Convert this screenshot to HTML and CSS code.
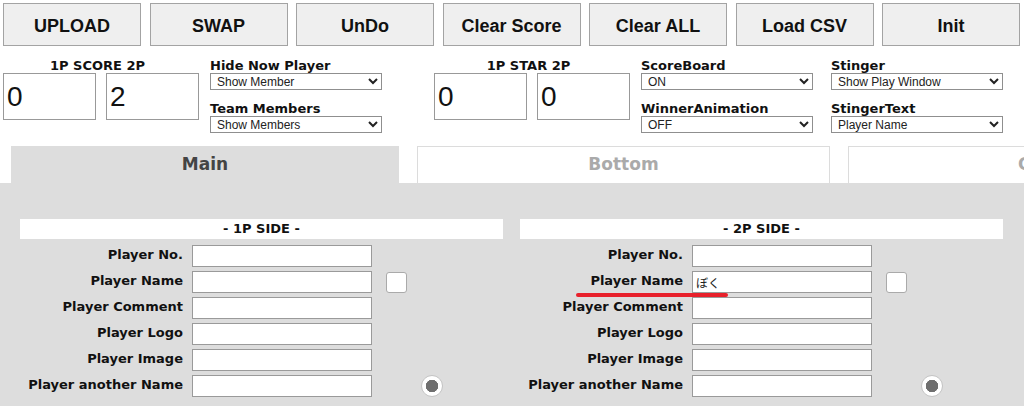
FILE: index.html
```html
<!DOCTYPE html>
<html lang="ja">
<head>
  <meta charset="UTF-8" />
  <meta name="viewport" content="width=device-width, initial-scale=1" />
  <title>Score Controller</title>
  <link rel="stylesheet" href="styles.css">
</head>
<body>

  <div class="toolbar">
    <button class="tool-btn">UPLOAD</button>
    <button class="tool-btn">SWAP</button>
    <button class="tool-btn">UnDo</button>
    <button class="tool-btn">Clear Score</button>
    <button class="tool-btn">Clear ALL</button>
    <button class="tool-btn">Load CSV</button>
    <button class="tool-btn">Init</button>
  </div>

  <div class="controls">
    <div class="pair">
      <div class="pair-title">1P SCORE 2P</div>
      <div class="pair-inputs">
        <input type="text" class="big-input" value="0" />
        <input type="text" class="big-input" value="2" />
      </div>
    </div>

    <div class="select-group first">
      <label class="ctrl-label">Hide Now Player</label>
      <select class="ctrl-select"><option>Show Member</option></select>
      <label class="ctrl-label second">Team Members</label>
      <select class="ctrl-select"><option>Show Members</option></select>
    </div>

    <div class="pair star">
      <div class="pair-title">1P STAR 2P</div>
      <div class="pair-inputs">
        <input type="text" class="big-input" value="0" />
        <input type="text" class="big-input" value="0" />
      </div>
    </div>

    <div class="select-group">
      <label class="ctrl-label">ScoreBoard</label>
      <select class="ctrl-select"><option>ON</option></select>
      <label class="ctrl-label second">WinnerAnimation</label>
      <select class="ctrl-select"><option>OFF</option></select>
    </div>

    <div class="select-group">
      <label class="ctrl-label">Stinger</label>
      <select class="ctrl-select"><option>Show Play Window</option></select>
      <label class="ctrl-label second">StingerText</label>
      <select class="ctrl-select"><option>Player Name</option></select>
    </div>
  </div>

  <div class="tabs">
    <div class="tab active">Main</div>
    <div class="tab">Bottom</div>
    <div class="tab">Camera</div>
  </div>

  <div class="panel">
    <div class="side">
      <div class="side-title">- 1P SIDE -</div>
      <div class="rows">
        <label class="row-label">Player No.</label>
        <input type="text" class="row-input" />
        <span></span>
        <label class="row-label">Player Name</label>
        <input type="text" class="row-input" />
        <span><input type="checkbox" class="check" /></span>
        <label class="row-label">Player Comment</label>
        <input type="text" class="row-input" />
        <span></span>
        <label class="row-label">Player Logo</label>
        <input type="text" class="row-input" />
        <span></span>
        <label class="row-label">Player Image</label>
        <input type="text" class="row-input" />
        <span></span>
        <label class="row-label">Player another Name</label>
        <input type="text" class="row-input" />
        <span><input type="radio" class="radio" name="winner" checked /></span>
      </div>
    </div>

    <div class="side">
      <div class="side-title">- 2P SIDE -</div>
      <div class="rows">
        <label class="row-label">Player No.</label>
        <input type="text" class="row-input" />
        <span></span>
        <label class="row-label">Player Name</label>
        <input type="text" class="row-input jp" value="ぼく" />
        <span><input type="checkbox" class="check" /></span>
        <label class="row-label">Player Comment</label>
        <input type="text" class="row-input" />
        <span></span>
        <label class="row-label">Player Logo</label>
        <input type="text" class="row-input" />
        <span></span>
        <label class="row-label">Player Image</label>
        <input type="text" class="row-input" />
        <span></span>
        <label class="row-label">Player another Name</label>
        <input type="text" class="row-input" />
        <span><input type="radio" class="radio" name="winner2" checked /></span>
      </div>
      <!-- 赤線 -->
      <span class="mark-line"></span>
    </div>
  </div>

</body>
</html>
```

FILE: styles.css
```css
body {
  margin: 0;
  font-family: 'DejaVu Sans', Verdana, sans-serif;
  color: #111;
  background-color: #fff;
  overflow: hidden;
}
.toolbar {
  display: flex;
  gap: 8.5px;
  padding: 3px 4px 0 3px;
}
.tool-btn {
  flex: 1;
  height: 43px;
  margin: 0;
  padding: 4px 0 0;
  background-color: #efefef;
  border: 1px solid #a3a3a3;
  font-family: 'Liberation Sans', Arial, sans-serif;
  font-size: 18px;
  font-weight: 700;
  color: #111;
  cursor: pointer;
}
.tool-btn:hover {
  background-color: #e5e5e5;
}
.controls {
  display: flex;
  align-items: flex-start;
  margin-top: 12px;
  padding-left: 3px;
}
.pair {
  width: 197px;
}
.pair.star {
  margin-left: 52px;
}
.pair-title {
  font-size: 13px;
  font-weight: 700;
  line-height: 15px;
  text-align: center;
  padding-right: 8px;
}
.pair-inputs {
  display: flex;
  gap: 10px;
}
.big-input {
  width: 93px;
  height: 47px;
  box-sizing: border-box;
  border: 1px solid #999;
  padding: 0 3px;
  font-family: 'Liberation Sans', Arial, sans-serif;
  font-size: 28px;
  color: #111;
}
.select-group {
  display: flex;
  flex-direction: column;
  width: 172px;
  margin-left: 10px;
}
.select-group + .select-group {
  margin-left: 18px;
}
.select-group.first {
  margin-left: 10px;
}
.ctrl-label {
  font-size: 13px;
  font-weight: 700;
  line-height: 15px;
}
.ctrl-label.second {
  margin-top: 11px;
}
.ctrl-select {
  height: 17px;
  box-sizing: border-box;
  border: 1px solid #8f8f8f;
  border-radius: 0;
  background-color: #fff;
  padding: 0 2px;
  font-family: 'Liberation Sans', Arial, sans-serif;
  font-size: 12px;
  color: #222;
}
.tabs {
  display: flex;
  gap: 18px;
  margin-top: 13px;
  padding-left: 11px;
  white-space: nowrap;
}
.tab {
  flex: 0 0 413px;
  height: 37px;
  box-sizing: border-box;
  border: 1px solid #dcdcdc;
  border-bottom: none;
  background-color: #fff;
  text-align: center;
  line-height: 34px;
  font-size: 17px;
  font-weight: 700;
  color: #aaa;
}
.tab.active {
  flex-basis: 388px;
  background-color: #ddd;
  border-color: #ddd;
  color: #444;
}
.panel {
  display: flex;
  gap: 17px;
  background-color: #ddd;
  padding: 36px 21px 30px 20px;
}
.side {
  flex: 1;
  position: relative;
}
.side-title {
  background-color: #fff;
  height: 20px;
  line-height: 20px;
  text-align: center;
  font-size: 13px;
  font-weight: 700;
}
.rows {
  display: grid;
  grid-template-columns: 163px 180px 1fr;
  column-gap: 9px;
  row-gap: 4px;
  align-items: center;
  margin-top: 6px;
}
.row-label {
  text-align: right;
  font-size: 13px;
  font-weight: 700;
  line-height: 20px;
  padding-bottom: 2px;
  white-space: nowrap;
}
.row-input {
  width: 180px;
  height: 22px;
  box-sizing: border-box;
  border: 1px solid #9a9a9a;
  padding: 0 3px;
  margin: 0;
  font-family: 'Liberation Sans', 'Noto Sans CJK JP', sans-serif;
  font-size: 12px;
  background-color: #fff;
}
.row-input.jp {
  font-family: 'Noto Sans CJK JP', sans-serif;
  color: #222;
}
.rows span {
  display: flex;
  align-items: center;
  height: 22px;
}
.check {
  appearance: none;
  width: 21px;
  height: 21px;
  margin: 0 0 0 5px;
  background-color: #fff;
  border: 1px solid #aaa;
  border-radius: 3px;
}
.radio {
  appearance: none;
  width: 22px;
  height: 22px;
  margin: 0 0 0 40px;
  border: 1px solid #c4c4c4;
  border-radius: 50%;
  background: radial-gradient(circle, #6f6f6f 0 6px, #fff 6.5px);
}
.mark-line {
  position: absolute;
  left: 56px;
  top: 74px;
  width: 152px;
  height: 4px;
  border-radius: 2px;
  background-color: #e8202b;
}
```
